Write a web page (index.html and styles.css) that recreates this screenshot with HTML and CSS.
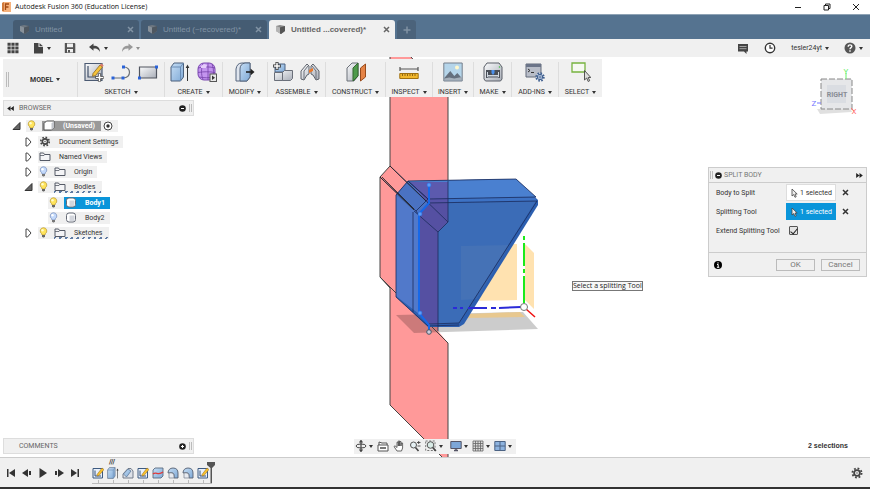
FILE: index.html
```
<!DOCTYPE html>
<html lang="en">
<head>
  <meta charset="utf-8">
  <title>Autodesk Fusion 360 (Education License)</title>
  <link rel="stylesheet" href="styles.css">
</head>
<body>
  <!-- Shared icons -->
  <svg class="defs" width="0" height="0" aria-hidden="true">
    <defs>
      <linearGradient id="steel" x1="0" y1="0" x2="1" y2="1"><stop offset="0" stop-color="#fafbfc"/><stop offset="1" stop-color="#a9aeb8"/></linearGradient>
      <linearGradient id="sky" x1="0" y1="0" x2="1" y2="1"><stop offset="0" stop-color="#c6def5"/><stop offset="1" stop-color="#7fa9d6"/></linearGradient>
    </defs>
    <symbol id="i-doc" viewBox="0 0 11 11"><path d="M1 2l4-1 5 1v5l-4 3-5-3z" fill="#8a8a8a"/><path d="M1 2l4 1.500v6L1 7z" fill="#b5b5b5"/><path d="M5 3.500L10 2v5l-4 3-1-.5z" fill="#555"/></symbol>
    <symbol id="i-close" viewBox="0 0 7 7"><path d="M1 1l5 5M6 1L1 6" stroke="currentColor" stroke-width="1.500" fill="none"/></symbol>
    <symbol id="i-bulb" viewBox="0 0 9 11"><path d="M4.500.7a3.300 3.300 0 0 1 1.900 6L6 8H3l-.4-1.300a3.300 3.300 0 0 1 1.900-6z" fill="#ffe45c" stroke="#b8952a" stroke-width=".7"/><circle cx="3.500" cy="3.200" r="1.200" fill="#fffbd0"/><path d="M3 8h3v1.500l-1 1H4l-1-1z" fill="#666"/></symbol>
    <symbol id="i-bulb-off" viewBox="0 0 9 11"><path d="M4.500.7a3.300 3.300 0 0 1 1.900 6L6 8H3l-.4-1.300a3.300 3.300 0 0 1 1.900-6z" fill="#c3d9fb" stroke="#7289b8" stroke-width=".7"/><circle cx="3.500" cy="3.200" r="1.200" fill="#fff"/><path d="M3 8h3v1.500l-1 1H4l-1-1z" fill="#777"/></symbol>
    <symbol id="i-folder" viewBox="0 0 12 10"><path d="M1 9V1.500h3.500l1 1.500H11v6z" fill="#f4f4f6" stroke="#555a66"/><path d="M1 4h4l1-1" stroke="#555a66" fill="none" stroke-width=".8"/></symbol>
    <symbol id="i-body" viewBox="0 0 11 11"><rect x="1" y="1" width="9" height="9" rx="2.500" fill="#fff" stroke="#676c78"/><path d="M4 3.500h5V9H4z" fill="#d3d6dd"/></symbol>
    <symbol id="i-gear" viewBox="0 0 12 12"><circle cx="6" cy="6" r="4.600" fill="none" stroke="#444" stroke-width="1.800" stroke-dasharray="1.800 1.810"/><circle cx="6" cy="6" r="2.900" fill="none" stroke="#444" stroke-width="1.800"/><circle cx="6" cy="6" r=".7" fill="#444"/></symbol>
    <symbol id="i-open" viewBox="0 0 9 9"><path d="M8 1v7H1z" fill="#666" stroke="#333"/></symbol>
    <symbol id="i-closed" viewBox="0 0 7 10"><path d="M1 1h1.500L6 5 2.500 9H1z" fill="#fff" stroke="#444"/></symbol>
    <symbol id="i-cursor" viewBox="0 0 7 10"><path d="M1 1v7l1.700-1.400L4 9.300l1.200-.6L4 6h2.200z" fill="#eee" stroke="#444" stroke-width=".8"/></symbol>
    <symbol id="i-sketch" viewBox="0 0 20 20"><path d="M1 1.500h17v17H1z" fill="url(#steel)" stroke="#4b5a72" stroke-width="1.200"/><path d="M4 4v11h11" fill="none" stroke="#42506a" stroke-width="1.200"/><path d="M9 11.500L16 3l2.500 2-7 8.500-3 .8z" fill="#f5c33b" stroke="#8a6420" stroke-width=".8"/><path d="M16 3l1.200-1.500L19.700 3.500 18.500 5z" fill="#e07b6a"/></symbol>
    <symbol id="i-sketch-small" viewBox="0 0 12 12"><path d="M1 1.500h9.500V11H1z" fill="#e8f0fa" stroke="#3d5a80"/><path d="M3 3.500V9h6" fill="none" stroke="#34507a"/><path d="M5 7.500L10 1l2 1.500-5 6-2 .5z" fill="#f9c22e" stroke="#8a6420" stroke-width=".5"/></symbol>
    <symbol id="i-extrude" viewBox="0 0 20 20"><path d="M1 5l3-4h9.500v14l-3 4H1z" fill="url(#sky)" stroke="#4d617c"/><path d="M1 5h9.500v14M10.500 5l3-4" fill="none" stroke="#6a8cb4"/><path d="M17.500 19V4" stroke="#333"/><path d="M15.700 6l1.800-3.500L19.300 6z" fill="#333"/></symbol>
    <symbol id="i-fillet" viewBox="0 0 12 12"><path d="M1 6C1 3 3 1 6 1c3.500 0 5 2 5 5v5H7V8C7 6 5 5 1 6z" fill="url(#sky)" stroke="#555f70" stroke-width=".9"/><path d="M2 11V6c4-.5 5 1 5 5z" fill="#e7eaf0" stroke="#777f8c" stroke-width=".7"/></symbol>
  </svg>

  <header class="titlebar">
    <svg class="logo" viewBox="0 0 9 10"><path d="M0 1l2-1h7v10H1L0 9z" fill="#f6b27c"/><path d="M0 1l2-1v9L0 9z" fill="#d0793a"/><path d="M3.500 8V2H7M3.500 5h3" fill="none" stroke="#a34a12" stroke-width="1.300"/></svg>
    <h1 class="app-title">Autodesk Fusion 360 (Education License)</h1>
    <div class="window-buttons">
      <button aria-label="Minimize"><svg viewBox="0 0 8 8"><path d="M1 4.500h6" stroke="#222"/></svg></button>
      <button aria-label="Restore"><svg viewBox="0 0 8 8"><path d="M1 2.500h4.500V7H1zM2.500 2.500V1H7v4.500H5.500" fill="none" stroke="#222"/></svg></button>
      <button aria-label="Close"><svg viewBox="0 0 8 8"><path d="M1 1l6 6M7 1L1 7" stroke="#222" fill="none"/></svg></button>
    </div>
  </header>

  <nav class="tabs">
    <div class="tab"><svg class="tab-icon"><use href="#i-doc"/></svg><a href="#">Untitled</a><button aria-label="Close tab"><svg><use href="#i-close"/></svg></button></div>
    <div class="tab"><svg class="tab-icon"><use href="#i-doc"/></svg><a href="#">Untitled (~recovered)*</a><button aria-label="Close tab"><svg><use href="#i-close"/></svg></button></div>
    <div class="tab active"><svg class="tab-icon"><use href="#i-doc"/></svg><a href="#">Untitled ...covered)*</a><button aria-label="Close tab"><svg><use href="#i-close"/></svg></button></div>
    <button class="tab-add" aria-label="New tab"><svg viewBox="0 0 8 8"><path d="M4 .5v7M.5 4h7" stroke="currentColor" stroke-width="1.500"/></svg></button>
  </nav>

  <div class="quickbar">
    <div class="quick-group">
      <button aria-label="Data panel"><svg viewBox="0 0 12 12"><path d="M.5 2.200h11M.5 6h11M.5 9.800h11" stroke="#444" stroke-width="3" stroke-dasharray="3.200 .7"/></svg></button>
      <button aria-label="File"><svg viewBox="0 0 12 12"><path d="M2 1h4.500v4H11v6.500H2z" fill="#444"/><path d="M7.500 1L11 4.200H7.500z" fill="#444"/></svg><span class="caret"></span></button>
      <button aria-label="Save"><svg viewBox="0 0 12 12"><path d="M.8 1h9.700l.8.800V11H.8z" fill="#555"/><path d="M3 1.500h6v3.700H3zM3 7h6v3.500H3z" fill="#f0f0f0"/><path d="M4 8h2v2.500H4z" fill="#555"/></svg></button>
      <button aria-label="Undo"><svg viewBox="0 0 12 12"><path d="M0 5l4.500-3.500v2.200C8.500 3.700 11 5.500 11 10 9.500 7.200 8 6.500 4.500 6.500v2.200z" fill="#444"/></svg><span class="caret"></span></button>
      <button aria-label="Redo" class="faded"><svg viewBox="0 0 12 12"><path d="M12 5L7.500 1.500v2.200C3.500 3.700 1 5.500 1 10c1.500-2.800 3-3.500 6.500-3.500v2.200z" fill="#444"/></svg><span class="caret"></span></button>
    </div>
    <div class="quick-group account">
      <button aria-label="Comments"><svg viewBox="0 0 12 12"><path d="M1 2h10v7.500H9.500V12L7 9.500H1z" fill="#444"/><path d="M2.500 4.500h7M2.500 6.700h7" stroke="#bbb" stroke-width=".8"/></svg></button>
      <button aria-label="Job status"><svg viewBox="0 0 12 12"><circle cx="6" cy="6" r="4.700" fill="#fff" stroke="#333" stroke-width="1.400"/><path d="M6 3v3.200h2.600" fill="none" stroke="#333" stroke-width="1.200"/></svg></button>
      <button>tesler24yt<span class="caret"></span></button>
      <button aria-label="Help"><svg viewBox="0 0 12 12"><circle cx="6" cy="6" r="5.500" fill="#555"/><path d="M4.200 4.700c0-2.600 3.700-2.300 3.600-.2C7.700 5.700 6 5.700 6 7.300M6 8.300v1.400" fill="none" stroke="#fff" stroke-width="1.400"/></svg><span class="caret"></span></button>
    </div>
  </div>

  <main class="viewport">
    <!-- Model view -->
    <svg class="scene" viewBox="0 57 870 400" role="img" aria-label="Model">
      <path d="M461 246l56-2v56l-56 1z" fill="#ffe2b0"/>
      <path d="M525 244l9 9v56l-9-9z" fill="#ffe2b0"/>
      <path d="M390 56h20l38 40v126l-10 10v99l10 12v120l-58-58V288l-10-11V177l10-11z" fill="#ff9999"/>
      <path d="M396 315l127-3 15 17-124 4z" fill="#000" opacity=".2"/>
      <path d="M466 314l54-2 5 5-59 1z" fill="#e8c88f"/>
      <path d="M410 56l38 40v126M390 56v110l-10 11v100l10 11v117l58 58V343l-19-19M380 277l48 48" fill="none" stroke="#444" stroke-width="1"/>
      <!-- Blue body -->
      <path d="M396 195l12-14 108-2 22 21v5l-74 119-5 3h-31l-32-30z" fill="#2c5fb0"/>
      <path d="M408 181l108-2 20 18-108 2z" fill="#4a80d0"/>
      <path d="M428 199l107-2 2 4-109 2z" fill="#3d72c4"/>
      <path d="M419 213l9-10 108-2-77 122-31 2-9-11z" fill="#3b6cb7"/>
      <path d="M396 195l23 18v101l-23-18z" fill="#5179ca"/>
      <path d="M396 195l12-14 20 18v5l-10 10z" fill="#4a72c2"/>
      <path d="M461 246l49-1-33 54-16 1z" fill="#ffe2b0" opacity=".05"/>
      <path d="M410 182h38v40l-10 10v93l-10-1-9-11V213l9-10z" fill="#6c3a92" opacity=".55"/>
      <path d="M408 181l108-2 20 18-108 2zM427 203l110-2-78 122-30 1M396 195l12-14M396 195v102l32 29 31-1M413 212v100M438 232v99M448 181v41l-10 10-24-21M390 166l58 56M380 177l36 34 12-12-20-18M416 211l2 3" fill="none" stroke="#1c2c5c" stroke-width=".8"/>
      <path d="M390 166l36 35M380 177l34 33M382 177l32 32" stroke="#222" stroke-width=".8"/>
      <path d="M429 185v18l-10 11v99l10 12v7" fill="none" stroke="#1668e8" stroke-width="2"/>
      <g fill="#5d9cf8" stroke="#2a72e0" stroke-width=".6"><circle cx="429" cy="185" r="2"/><circle cx="420" cy="214" r="2"/><circle cx="420" cy="313" r="2"/></g>
      <circle cx="429" cy="332" r="2.300" fill="#ccd" stroke="#456"/>
      <!-- Origin axes -->
      <path d="M524 236v67" stroke="#1bea1b" stroke-width="2" stroke-dasharray="4 3 23 3 4 3 40"/>
      <path d="M453 308h4m3 0h3m5 0h19m4 0h5m3 0l22-1" stroke="#2b2bd8" stroke-width="2"/>
      <path d="M526 309l9 8" stroke="#f01010" stroke-width="1.500"/>
      <circle cx="524" cy="307" r="3.500" fill="#fff" stroke="#777"/>
    </svg>
    <div class="tooltip" role="tooltip">Select a splitting Tool</div>

    <div class="workspace">
      <div class="left-side">
        <div class="ribbon">
          <div class="ribbon-group model"><span class="grip"></span><button class="ribbon-label bold">MODEL<span class="caret"></span></button></div>
          <div class="ribbon-group">
            <div class="ribbon-icons">
              <button aria-label="Create sketch"><svg viewBox="0 0 20 20"><use href="#i-sketch"/><path d="M15.500 11.500v8M11.500 15.500h8" stroke="#333" stroke-width="3.200"/><path d="M15.500 12v7M12 15.500h7" stroke="#fff" stroke-width="1.600"/></svg></button>
              <button aria-label="Line"><svg viewBox="0 0 20 20"><path d="M2 16h10c9-1 8-11 1-11" fill="none" stroke="#6b7076" stroke-width="1.200"/><path d="M.5 14.500h3v3h-3zM10.500 14.500h3v3h-3zM11 3.500h3v3h-3z" fill="#2a63d8"/></svg></button>
              <button aria-label="Rectangle"><svg viewBox="0 0 20 20"><path d="M1.500 5h17v11h-17z" fill="url(#steel)" stroke="#50555f" stroke-width="1.200"/><path d="M17 3.500h3v3h-3zM0 14.500h3v3H0z" fill="#2a63d8"/></svg></button>
            </div>
            <button class="ribbon-label">SKETCH<span class="caret"></span></button>
          </div>
          <div class="ribbon-group">
            <div class="ribbon-icons">
              <button aria-label="Extrude"><svg viewBox="0 0 20 20"><use href="#i-extrude"/></svg></button>
              <button aria-label="Form"><svg viewBox="0 0 20 20"><rect x="1" y="1" width="17" height="17" rx="6" fill="#c394ee" stroke="#7a48b0"/><path d="M6 1.500c-2 5-2 11 0 16M11 1v17M15 2c2 5 2 10 0 15M1 6c5-1.500 12-1.500 17 0M1 10.500c5-1 12-1 17 0M2 15c5 1 10 1 15 0" fill="none" stroke="#7440a8" stroke-width=".8"/><path d="M4 4l3-2 3 1-1 3H4z" fill="#e5ccfb"/><rect x="13" y="12" width="6.500" height="7.500" fill="#e8e8e8" stroke="#555"/><path d="M15 13.500l3 2.200-3 2.300z" fill="#333"/></svg></button>
            </div>
            <button class="ribbon-label">CREATE<span class="caret"></span></button>
          </div>
          <div class="ribbon-group">
            <div class="ribbon-icons">
              <button aria-label="Press pull"><svg viewBox="0 0 20 20"><path d="M1 7q1-6 6-6h8v14l-3 4H1z" fill="#dfe5ee" stroke="#56667e"/><path d="M5 19V7q0-5 5-6h5v14l-3 4z" fill="url(#sky)" stroke="#56667e"/><path d="M11 10h5" stroke="#222" stroke-width="1.600"/><path d="M15.500 6.500l4 3.500-4 3.500z" fill="#222"/></svg></button>
            </div>
            <button class="ribbon-label">MODIFY<span class="caret"></span></button>
          </div>
          <div class="ribbon-group">
            <div class="ribbon-icons">
              <button aria-label="New component"><svg viewBox="0 0 20 20"><path d="M2 4l2-2h8v8H2z" fill="url(#sky)" stroke="#4b6384"/><path d="M1.500 10.500h8v8h-8zM9.500 10.500l2-2h8v8l-2 2h-8z" fill="url(#steel)" stroke="#6a6f79"/><path d="M4 0v8M0 4h8" stroke="#333" stroke-width="3"/><path d="M4 .8v6.400M.8 4h6.400" stroke="#fff" stroke-width="1.500"/></svg></button>
              <button aria-label="Joint"><svg viewBox="0 0 20 20"><path d="M1 9l6-7 2 2v8l-2 1-3 5-3-1zM19 9l-6-7-2 2v8l2 1 3 5 3-1z" fill="url(#steel)" stroke="#5e636c"/><path d="M4 17V9l4-5M16 17V9l-4-5" fill="none" stroke="#6c717b"/><path d="M9 8l4-2v3l-4 2z" fill="#e9792c"/></svg></button>
            </div>
            <button class="ribbon-label">ASSEMBLE<span class="caret"></span></button>
          </div>
          <div class="ribbon-group">
            <div class="ribbon-icons">
              <button aria-label="Offset plane"><svg viewBox="0 0 20 20"><path d="M1 6l5-5h6v13l-4 5H1z" fill="url(#steel)" stroke="#6b7078"/><path d="M7 6l5-5v13l-5 5z" fill="#4e9a4b" stroke="#33672f"/><path d="M14.500 6l5-4v13l-5 4z" fill="#e58346" stroke="#974a1b"/></svg></button>
            </div>
            <button class="ribbon-label">CONSTRUCT<span class="caret"></span></button>
          </div>
          <div class="ribbon-group">
            <div class="ribbon-icons">
              <button aria-label="Measure"><svg viewBox="0 0 20 20"><path d="M1 5v4M19 5v4M1 7h18" stroke="#555" stroke-width="1.200"/><path d="M.8 11.500h18.400v5H.8z" fill="#f1b72c" stroke="#a0700e"/><path d="M3.500 12v2M6 12v2M8.500 12v2M11 12v2M13.500 12v2M16 12v2" stroke="#76520a" stroke-width=".8"/></svg></button>
            </div>
            <button class="ribbon-label">INSPECT<span class="caret"></span></button>
          </div>
          <div class="ribbon-group">
            <div class="ribbon-icons">
              <button aria-label="Decal"><svg viewBox="0 0 20 20"><path d="M.8 1h18.400v18H.8z" fill="#b5d5ea" stroke="#757f8b"/><circle cx="14" cy="5.500" r="2" fill="#fff8cc"/><path d="M1.300 16l6-7 4 5 3-3 4.500 5v2.500H1.300z" fill="#65707e"/><path d="M1.300 16.500l5-1 5 1 7.500-1.500v3.500H1.300z" fill="#a5b0bb"/></svg></button>
            </div>
            <button class="ribbon-label">INSERT<span class="caret"></span></button>
          </div>
          <div class="ribbon-group">
            <div class="ribbon-icons">
              <button aria-label="3D print"><svg viewBox="0 0 20 20"><path d="M1 5l3-4h12l3 4v12l-1.500 2h-15L1 17z" fill="url(#steel)" stroke="#5a5f68"/><path d="M3 8h14v8H3z" fill="#4a4f58"/><path d="M4.500 10v5h11v-5M5 13.500h10" fill="none" stroke="#cfd6df"/><path d="M8.500 8h3v3L10 13l-1.500-2z" fill="#4c91ed"/><circle cx="16.500" cy="5" r=".8" fill="#3ebd3e"/></svg></button>
            </div>
            <button class="ribbon-label">MAKE<span class="caret"></span></button>
          </div>
          <div class="ribbon-group">
            <div class="ribbon-icons">
              <button aria-label="Scripts"><svg viewBox="0 0 20 20"><path d="M1 2h15v13H1z" fill="#b8bdc8" stroke="#636b7a"/><path d="M1 2h15v3H1z" fill="#6b7488"/><path d="M3 7l2 1.500L3 10M6 10.500h3" fill="none" stroke="#333"/><circle cx="15" cy="15" r="3.700" fill="#dbe6f6" stroke="#41608f" stroke-width="2" stroke-dasharray="1.600 1.300"/><circle cx="15" cy="15" r="2.700" fill="#dbe6f6" stroke="#41608f"/><path d="M15 12v6M12 15h6" stroke="#41608f" stroke-width=".8"/></svg></button>
            </div>
            <button class="ribbon-label">ADD-INS<span class="caret"></span></button>
          </div>
          <div class="ribbon-group">
            <div class="ribbon-icons">
              <button aria-label="Select"><svg viewBox="0 0 20 20"><path d="M1 1h13v9H1z" fill="#f6f9f2" stroke="#77b33f" stroke-width="1.300"/><path d="M13.500 8.500v9.500l2.200-2 1.500 3.500 1.500-.8-1.500-3.200h2.600z" fill="#ddd" stroke="#444" stroke-width=".9"/></svg></button>
            </div>
            <button class="ribbon-label">SELECT<span class="caret"></span></button>
          </div>
        </div>

        <section class="browser">
          <div class="panel-head">
            <svg class="rewind" viewBox="0 0 8 6"><path d="M4 0v6L0 3zM8 0v6L4 3z" fill="#222"/></svg>
            <h2>BROWSER</h2>
            <svg class="dot" viewBox="0 0 7 7"><circle cx="3.500" cy="3.500" r="3.300" fill="#222"/><path d="M2 3.500h3" stroke="#fff"/></svg>
            <span class="grip"></span>
          </div>
          <ul class="tree">
            <li>
              <div class="node"><svg class="arrow"><use href="#i-open"/></svg><div class="chip"><svg class="bulb"><use href="#i-bulb"/></svg><span class="root-name"><svg class="kind" viewBox="0 0 12 11"><path d="M1 3.500L3.500 1H11v6.500L8.500 10H1z" fill="#fff" stroke="#555"/><path d="M8.500 3.500L11 1v6.500L8.500 10z" fill="#c2c5cb"/></svg><b>(Unsaved)</b></span><svg class="target" viewBox="0 0 10 10"><circle cx="5" cy="5" r="4" fill="#fff" stroke="#444"/><circle cx="5" cy="5" r="1.700" fill="#333"/></svg></div></div>
              <ul>
                <li><div class="node"><svg class="arrow"><use href="#i-closed"/></svg><div class="chip"><svg class="kind"><use href="#i-gear"/></svg><span>Document Settings</span></div></div></li>
                <li><div class="node"><svg class="arrow"><use href="#i-closed"/></svg><div class="chip"><svg class="kind"><use href="#i-folder"/></svg><span>Named Views</span></div></div></li>
                <li><div class="node"><svg class="arrow"><use href="#i-closed"/></svg><div class="chip"><svg class="bulb"><use href="#i-bulb-off"/></svg><svg class="kind"><use href="#i-folder"/></svg><span>Origin</span></div></div></li>
                <li>
                  <div class="node"><svg class="arrow"><use href="#i-open"/></svg><div class="chip"><svg class="bulb"><use href="#i-bulb"/></svg><div class="hatched"><svg class="kind"><use href="#i-folder"/></svg><span>Bodies</span></div></div></div>
                  <ul>
                    <li><div class="node"><div class="chip"><svg class="bulb"><use href="#i-bulb"/></svg><div class="picked"><svg class="kind"><use href="#i-body"/></svg><b>Body1</b></div></div></div></li>
                    <li><div class="node"><div class="chip"><svg class="bulb"><use href="#i-bulb-off"/></svg><div class="plain"><svg class="kind"><use href="#i-body"/></svg><span>Body2</span></div></div></div></li>
                  </ul>
                </li>
                <li><div class="node"><svg class="arrow"><use href="#i-closed"/></svg><div class="chip"><svg class="bulb"><use href="#i-bulb"/></svg><div class="hatched"><svg class="kind"><use href="#i-folder"/></svg><span>Sketches</span></div></div></div></li>
              </ul>
            </li>
          </ul>
        </section>
      </div>

      <div class="right-side">
        <svg class="viewcube" viewBox="0 0 50 56" role="img" aria-label="View cube">
          <path d="M8 44l33-1 2 4-32 2z" fill="#000" opacity=".12"/>
          <path d="M12 14h31v30H12z" fill="#e6e7e9"/>
          <path d="M12 14h31v30H12z" fill="none" stroke="#888" stroke-dasharray="6 2"/>
          <path d="M18 20h19v18H18z" fill="#dadde2"/>
          <path d="M37 8v6" stroke="#6cf06c"/><path d="M8 38h4" stroke="#7676ff"/><path d="M42 43l3 3" stroke="#ff7070"/>
          <text class="face" x="28" y="32">RIGHT</text>
          <text class="axis y" x="37" y="9">Y</text>
          <text class="axis z" x="5" y="41">Z</text>
          <text class="axis x" x="45" y="49">X</text>
        </svg>

        <form class="dialog" onsubmit="return false">
          <div class="dialog-head">
            <span class="grip"></span>
            <svg class="dot" viewBox="0 0 7 7"><circle cx="3.500" cy="3.500" r="3.300" fill="#222"/><path d="M2 3.500h3" stroke="#fff"/></svg>
            <h2>SPLIT BODY</h2>
            <svg class="rewind" viewBox="0 0 8 6"><path d="M0 0l4 3-4 3zM4 0l4 3-4 3z" fill="#222"/></svg>
          </div>
          <div class="fields">
            <label for="body">Body to Split</label>
            <button type="button" id="body" class="pick"><svg><use href="#i-cursor"/></svg>1 selected</button>
            <button type="button" class="clear" aria-label="Clear body"><svg><use href="#i-close"/></svg></button>
            <label for="splitter">Splitting Tool</label>
            <button type="button" id="splitter" class="pick on"><svg><use href="#i-cursor"/></svg>1 selected</button>
            <button type="button" class="clear" aria-label="Clear tool"><svg><use href="#i-close"/></svg></button>
            <label for="extend">Extend Splitting Tool</label>
            <input type="checkbox" id="extend" checked>
          </div>
          <div class="dialog-foot">
            <svg class="info" viewBox="0 0 8 8"><circle cx="4" cy="4" r="4" fill="#000"/><path d="M4 1.300v1.300M3 3.500h1.200v2.700M2.900 6.300h2.400" stroke="#fff" fill="none"/></svg>
            <button type="submit">OK</button>
            <button type="button">Cancel</button>
          </div>
        </form>
      </div>
    </div>

    <div class="bottom-row">
      <section class="panel-head comments">
        <h2>COMMENTS</h2>
        <svg class="dot" viewBox="0 0 7 7"><circle cx="3.500" cy="3.500" r="3.300" fill="#222"/><path d="M2 3.500h3M3.500 2v3" stroke="#fff"/></svg>
        <span class="grip"></span>
      </section>
      <div class="navbar">
        <button aria-label="Orbit"><svg viewBox="0 0 12 12"><ellipse cx="6" cy="6" rx="5" ry="2" fill="none" stroke="#444"/><path d="M6 1v10M4.500 2.500L6 .5l1.500 2M4.500 9.500l1.500 2 1.500-2" fill="none" stroke="#444" stroke-width="1.200"/></svg><span class="caret"></span></button>
        <button aria-label="Look at"><svg viewBox="0 0 12 12"><path d="M1 5h10v6H1zM2 5V2l3 1M10 5V3H5" fill="#fff" stroke="#555"/><path d="M3 7h6v2H3z" fill="#777"/></svg></button>
        <button aria-label="Pan"><svg viewBox="0 0 12 12"><path d="M4 11L1 6.500l1-.7L4 7.500V2.200h1.300V6 1h1.400v5V1.600H8V6l.3-3h1.300v5L8.500 11z" fill="#fff" stroke="#444" stroke-width=".8"/></svg></button>
        <button aria-label="Zoom"><svg viewBox="0 0 12 12"><circle cx="4.500" cy="5" r="3" fill="#e6f1f4" stroke="#555"/><path d="M6.500 7.500l3 3.500" stroke="#444" stroke-width="1.600"/><path d="M8 2.500h3.500M9.700 1v3M8.500 6h3" stroke="#444" stroke-width=".9"/></svg></button>
        <button aria-label="Fit"><svg viewBox="0 0 12 12"><path d="M.7 1h9.300v9.500H.7z" fill="none" stroke="#777" stroke-dasharray="2 1.500"/><circle cx="5.500" cy="5" r="3.300" fill="#d9ebe6" stroke="#555"/><path d="M7.800 7.500l3 3.500" stroke="#444" stroke-width="1.800"/></svg><span class="caret"></span></button>
        <button class="split" aria-label="Display"><svg viewBox="0 0 12 12"><path d="M.8 1.500h10.400v7H.8z" fill="#7da7d8" stroke="#556"/><path d="M4 10.500h4M6 8.500v2" stroke="#556" stroke-width="1.500"/></svg><span class="caret"></span></button>
        <button aria-label="Grid"><svg viewBox="0 0 12 12"><path d="M1 1h10v10H1zM3.500 1v10M6 1v10M8.500 1v10M1 3.500h10M1 6h10M1 8.500h10" fill="#ddd" stroke="#666" stroke-width=".8"/></svg><span class="caret"></span></button>
        <button aria-label="Viewports"><svg viewBox="0 0 12 12"><path d="M.8 1.500h10.400v9H.8zM6 1.500v9M.8 6h10.400" fill="#8db3df" stroke="#4c6384"/></svg><span class="caret"></span></button>
      </div>
      <p class="selection-count">2 selections</p>
    </div>
  </main>

  <footer class="timeline">
    <div class="playback">
      <button aria-label="Start"><svg viewBox="0 0 10 10"><path d="M1 1h1.500v8H1zM9 1v8L3 5z" fill="#333"/></svg></button>
      <button aria-label="Step back"><svg viewBox="0 0 10 10"><path d="M6 1v8L0 5zM7 3h2v4H7z" fill="#333"/></svg></button>
      <button aria-label="Play"><svg viewBox="0 0 10 10"><path d="M1.500 0L9 5l-7.500 5z" fill="#333"/></svg></button>
      <button aria-label="Step forward"><svg viewBox="0 0 10 10"><path d="M4 1v8l6-4zM1 3h2v4H1z" fill="#333"/></svg></button>
      <button aria-label="End"><svg viewBox="0 0 10 10"><path d="M7.500 1H9v8H7.500zM1 1v8l6-4z" fill="#333"/></svg></button>
    </div>
    <ol class="history">
      <li><svg><use href="#i-sketch-small"/></svg></li>
      <li class="marked"><svg><use href="#i-extrude"/></svg></li>
      <li><svg viewBox="0 0 12 12"><path d="M1 7l5-5.500h3L11 4v7H1z" fill="#dde1e8" stroke="#667080" stroke-width=".9"/><path d="M1.500 7L6 2l3 2-4.500 6z" fill="url(#sky)" stroke="#55708f" stroke-width=".7"/></svg></li>
      <li><svg><use href="#i-sketch-small"/></svg></li>
      <li><svg viewBox="0 0 12 12"><path d="M1 3l2-2h8v8l-2 2H1z" fill="url(#sky)" stroke="#5b6b80" stroke-width=".9"/><path d="M1 7c3-3 5 2 10-2" fill="none" stroke="#e03a3a" stroke-width="1.300"/></svg></li>
      <li><svg><use href="#i-fillet"/></svg></li>
      <li><svg><use href="#i-fillet"/></svg></li>
      <li><svg><use href="#i-sketch-small"/></svg></li>
    </ol>
    <svg class="marker" viewBox="0 0 8 22"><path d="M0 0h8v3L5 6v16H3.500V6L0 3z" fill="#555"/></svg>
    <button class="settings" aria-label="Settings"><svg><use href="#i-gear"/></svg></button>
  </footer>
</body>
</html>
```

FILE: styles.css
```
* {
  box-sizing: border-box;
}

body {
  display: flex;
  flex-direction: column;
  height: 100vh;
  margin: 0;
  background-color: #fff;
  color: #333;
  font: 7px/10px Roboto, "Liberation Sans", sans-serif;
  overflow: hidden;
}

h1, h2, p, ul, ol {
  margin: 0;
  padding: 0;
  font-size: 7px;
  font-weight: normal;
  list-style: none;
}

button {
  display: flex;
  align-items: center;
  padding: 0;
  border: 0;
  background: none;
  color: inherit;
  font: inherit;
  cursor: pointer;
}

svg {
  display: block;
  flex: none;
}

.defs {
  position: absolute;
}

.caret {
  margin-left: 3px;
  border: 2px solid transparent;
  border-top: 3px solid #333;
  border-bottom: 0;
}

.grip {
  width: 3px;
  height: 8px;
  border: 1px solid #bbb;
  border-width: 0 1px;
}

/* Title bar */
.titlebar {
  display: flex;
  align-items: center;
  height: 14px;
  padding: 0 10px 0 2px;
}

.logo {
  width: 9px;
  height: 10px;
}

.app-title {
  margin-left: 4px;
  color: #111;
  font-family: "Open Sans", sans-serif;
}

.window-buttons {
  display: flex;
  gap: 21px;
  margin-left: auto;
}

.window-buttons svg {
  width: 8px;
  height: 8px;
}

/* Document tabs */
.tabs {
  display: flex;
  align-items: flex-end;
  gap: 2px;
  height: 25px;
  padding-left: 13px;
  background-color: #557390;
  border-top: 1px solid #8fa3b5;
  font: 8px/10px "Liberation Sans", sans-serif;
}

.tab {
  display: flex;
  align-items: center;
  width: 126px;
  height: 19px;
  padding: 0 5px 0 6px;
  background-color: #455c73;
  border-radius: 3px 3px 0 0;
  color: #8193a4;
}

.tab a {
  margin: 0 auto 0 5px;
  color: inherit;
  text-decoration: none;
}

.tab-icon {
  width: 11px;
  height: 11px;
  opacity: .6;
}

.tab button svg {
  width: 7px;
  height: 7px;
}

.tab.active {
  background-color: #f0f0f0;
  color: #666;
  font-weight: bold;
}

.tab.active .tab-icon {
  opacity: 1;
}

.tab-add {
  justify-content: center;
  width: 19px;
  height: 19px;
  background-color: #4b637b;
  border-radius: 3px 3px 0 0;
  color: #8193a4;
}

.tab-add svg {
  width: 8px;
  height: 8px;
}

/* Quick access bar */
.quickbar {
  display: flex;
  justify-content: space-between;
  height: 18px;
  padding: 0 7px;
  background-color: #f0f0f0;
}

.quick-group {
  display: flex;
  align-items: center;
  gap: 13px;
}

.quick-group svg {
  width: 12px;
  height: 12px;
}

.quick-group.account {
  gap: 15px;
}

.faded {
  opacity: .5;
}

/* Viewport */
.viewport {
  position: relative;
  display: flex;
  flex: 1;
  flex-direction: column;
  justify-content: space-between;
  min-height: 0;
  padding: 2px 3px 3px;
}

.scene {
  position: absolute;
  inset: 0;
  width: 100%;
  height: 100%;
}

.tooltip {
  position: absolute;
  top: 224px;
  left: 572px;
  background-color: #f8f8f8;
  border: 1px solid #777;
  color: #222;
  font: 7px/8px "Open Sans", sans-serif;
}

.workspace,
.bottom-row {
  position: relative;
}

.workspace {
  display: flex;
  justify-content: space-between;
}

/* Ribbon */
.ribbon {
  display: grid;
  grid-template-columns: 75px 87px 58px 45px 58px 60px 47px 41px 38px 47px 43px;
  height: 38px;
  background-color: #f0f0f0;
}

.ribbon-group {
  display: flex;
  flex-direction: column;
  align-items: center;
  justify-content: space-between;
  margin-top: 3px;
  border-right: 1px solid #ddd;
}

.ribbon-group:last-child {
  border-right: 0;
}

.ribbon-group.model {
  flex-direction: row;
  justify-content: flex-start;
  gap: 21px;
  padding-left: 3px;
}

.ribbon-group.model .grip {
  height: 15px;
}

.ribbon-icons {
  display: flex;
  gap: 7px;
}

.ribbon-icons svg {
  width: 20px;
  height: 20px;
}

.ribbon-label {
  white-space: nowrap;
}

.ribbon-label.bold {
  font-weight: bold;
}

/* Side panels */
.panel-head {
  display: flex;
  align-items: center;
  width: 191px;
  height: 16px;
  padding: 0 1px 0 3px;
  background-color: #f0f0f0;
  border: 1px solid #ddd;
  color: #666;
}

.rewind {
  width: 7px;
  height: 5px;
}

.panel-head h2 {
  margin: 0 auto 0 5px;
}

.dot {
  width: 7px;
  height: 7px;
}

.panel-head .dot {
  margin-right: 3px;
}

.panel-head.comments h2 {
  margin-left: 12px;
}

.browser {
  margin-top: 3px;
}

/* Browser tree */
.tree {
  padding: 2px 0 0 9px;
}

.tree ul {
  padding: 1px 0 0 12px;
}

.tree ul ul {
  padding-left: 24px;
}

.node {
  display: flex;
  align-items: center;
  height: 15px;
}

.arrow {
  width: 9px;
  height: 10px;
  margin-right: 5px;
}

.chip,
.hatched,
.plain,
.picked,
.root-name {
  display: flex;
  align-items: center;
  height: 12px;
}

.chip {
  padding: 0 5px 0 1px;
  background-color: #f0f0f0;
}

.chip span {
  margin-left: 8px;
}

.bulb {
  width: 9px;
  height: 11px;
  margin-right: 6px;
}

.kind {
  width: 12px;
  height: 11px;
}

.root-name {
  height: 10px;
  padding: 0 6px 0 1px;
  background-color: #999;
  color: #fff;
}

.chip .root-name {
  margin-left: 0;
}

.root-name b {
  margin-left: 8px;
}

.target {
  width: 10px;
  height: 10px;
  margin-left: 2px;
}

.hatched {
  margin-right: -4px;
  padding-right: 6px;
  background: repeating-linear-gradient(120deg, #5f7ba3 0 2px, transparent 2px 5px) bottom / 100% 2px no-repeat;
}

.plain,
.picked {
  padding-left: 1px;
}

.picked {
  margin-right: -5px;
  padding-right: 5px;
  background-color: #0a95da;
  color: #fff;
}

.picked b {
  margin-left: 8px;
}

/* View cube and dialog */
.right-side {
  display: flex;
  flex-direction: column;
  align-items: flex-end;
  gap: 46px;
  padding-top: 6px;
}

.viewcube {
  width: 50px;
  height: 56px;
  margin-right: 8px;
}

.viewcube text {
  font-size: 7px;
  text-anchor: middle;
}

.viewcube .face {
  fill: #888c94;
  font-weight: bold;
}

.viewcube .axis {
  font-size: 8px;
}

.viewcube .y {
  fill: #6cf06c;
}

.viewcube .z {
  fill: #7676ff;
}

.viewcube .x {
  fill: #ff7070;
}

.dialog {
  width: 159px;
  background-color: #f0f0f0;
  border: 1px solid #ccc;
}

.dialog-head {
  display: flex;
  align-items: center;
  gap: 2px;
  height: 15px;
  padding: 0 3px 0 1px;
  border-bottom: 1px solid #ccc;
  color: #777;
}

.dialog-head h2 {
  margin-right: auto;
}

.fields {
  display: grid;
  grid-template-columns: 70px 50px auto;
  grid-auto-rows: 17px;
  align-items: center;
  gap: 2px 0;
  padding: 1px 7px 13px;
}

.pick {
  gap: 2px;
  height: 17px;
  padding-left: 4px;
  background-color: #fff;
  border: 1px solid #ddd;
  white-space: nowrap;
}

.pick svg {
  width: 7px;
  height: 10px;
}

.pick.on {
  background-color: #0a95da;
  border-color: #0a95da;
  color: #fff;
}

.clear {
  margin-left: 6px;
}

.clear svg {
  width: 7px;
  height: 7px;
}

.fields input {
  appearance: none;
  display: grid;
  place-items: center;
  width: 9px;
  height: 9px;
  margin: 0 3px;
  background-color: #e4e4e4;
  border: 1px solid #555;
  border-radius: 1px;
}

.fields input:checked::before {
  content: "";
  width: 3px;
  height: 6px;
  border: solid #222;
  border-width: 0 1px 1px 0;
  transform: rotate(40deg);
}

.dialog-foot {
  display: flex;
  align-items: center;
  gap: 6px;
  height: 24px;
  padding: 0 6px 0 5px;
  border-top: 1px solid #ccc;
}

.info {
  width: 8px;
  height: 8px;
  margin-right: auto;
}

.dialog-foot button {
  justify-content: center;
  width: 39px;
  height: 12px;
  border: 1px solid #bbb;
  color: #777;
  font-size: 8px;
}

/* Bottom of the viewport */
.bottom-row {
  display: grid;
  grid-template-columns: 1fr auto 1fr;
  align-items: center;
}

.navbar {
  display: flex;
  align-items: center;
  gap: 4px;
  height: 15px;
  padding: 0 4px 0 1px;
  background-color: #f0f0f0;
}

.navbar svg {
  width: 12px;
  height: 12px;
}

.navbar .caret {
  margin-left: 2px;
}

.navbar .split {
  margin-left: 3px;
}

.selection-count {
  padding-right: 19px;
  font-family: "Liberation Sans", sans-serif;
  font-weight: bold;
  text-align: right;
}

/* Timeline */
.timeline {
  display: flex;
  align-items: center;
  height: 32px;
  padding: 0 7px 0 6px;
  background-color: #f0f0f0;
  border-top: 1px solid #ccc;
  border-bottom: 2px solid #333;
}

.playback {
  display: flex;
  gap: 6px;
}

.playback svg {
  width: 10px;
  height: 10px;
}

.history {
  display: flex;
  margin-left: 12px;
  padding-top: 5px;
}

.history svg {
  width: 12px;
  height: 12px;
}

.history li {
  position: relative;
  padding: 0 3px 4px 0;
  border-bottom: 1px solid #bbb;
}

.history li::after {
  content: "";
  position: absolute;
  bottom: 0;
  left: 6px;
  height: 3px;
  border-left: 1px solid #bbb;
}

.history .marked::before {
  content: "///";
  position: absolute;
  top: -10px;
  left: 2px;
  font-weight: bold;
}

.marker {
  width: 8px;
  height: 22px;
  margin-left: -5px;
}

.settings {
  margin-left: auto;
}

.settings svg {
  width: 12px;
  height: 12px;
}
```
